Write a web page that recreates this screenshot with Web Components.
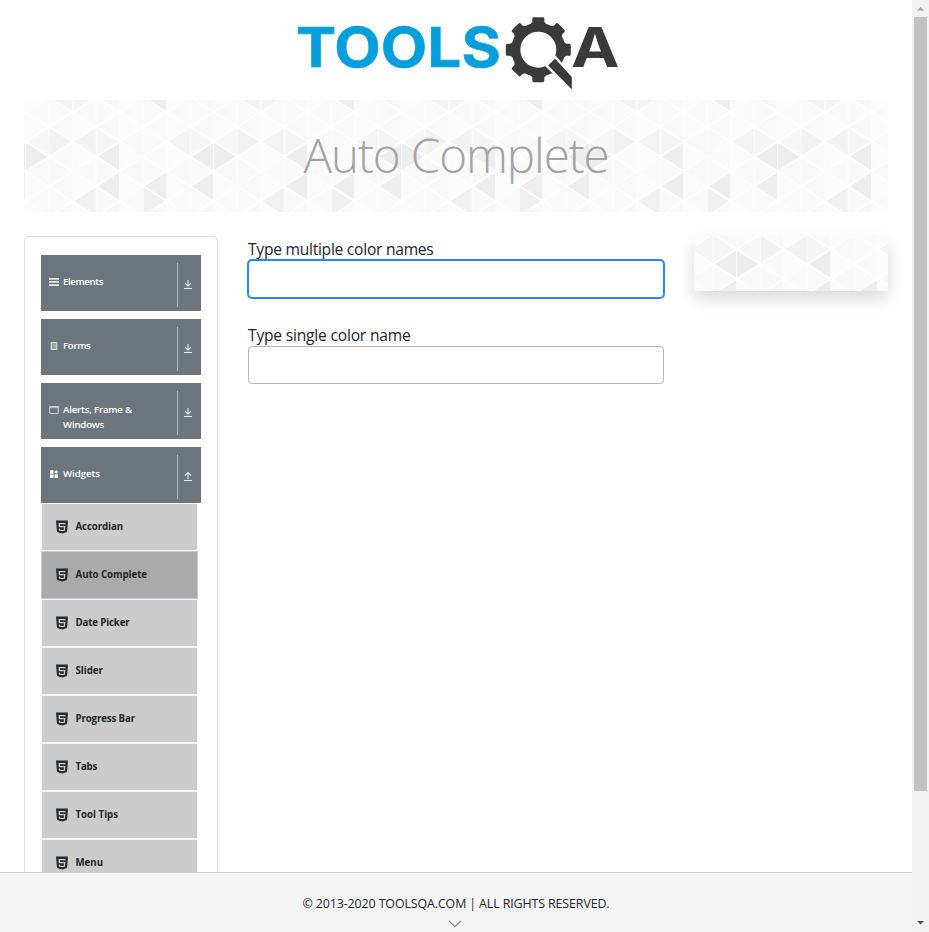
<!DOCTYPE html>
<html lang="en">
<head>
<meta charset="utf-8">
<title>ToolsQA</title>
<style>
html,body{margin:0;height:100%;overflow:hidden;background:#fff}
body{font-family:"Open Sans","Noto Sans",sans-serif;color:#212529}
</style>
</head>
<body>
<demo-page></demo-page>
<script>
const define = (name, html, ready) => customElements.define(name, class extends HTMLElement {
  constructor() {
    super();
    const t = document.createElement('template');
    t.innerHTML = html;
    this.attachShadow({mode: 'open'}).append(t.content.cloneNode(true));
  }
  connectedCallback() { if (ready) ready(this, this.shadowRoot); }
});

/* Single line whose letter spacing is tuned to a given width. */
define('fit-text', `<style>:host{display:inline-block;white-space:nowrap}span{display:inline-block}</style><span><slot></slot></span>`, (el, root) => {
  const span = root.querySelector('span'), n = el.textContent.length;
  const diff = (+el.getAttribute('width') - span.getBoundingClientRect().width) / n;
  span.style.letterSpacing = diff.toFixed(3) + 'px';
});

/* Triangle mosaic, centred in its box. */
define('triangle-mosaic', `<style>:host{display:block;overflow:hidden;background:#fdfdfd}svg{display:block;width:100%;height:100%}</style><svg></svg>`, (el, root) => {
  const W = +el.getAttribute('w'), H = +el.getAttribute('h'), cw = 23.5, h = 14.85;
  const x0 = W / 2 - 54.3 - 188 * 3, y0 = H / 2 + .6 - 4 * h;
  const dark = {'0,4':'ededed','1,0':'f3f3f3','1,3':'f2f2f2','2,0':'f4f4f4','2,3':'f3f3f3','2,7':'f1f1f1','3,4':'ededed','3,3':'f5f5f5','3,6':'ededed','5,0':'eeeeee','5,6':'eeeeee','5,7':'f0f0f0','6,3':'f4f4f4','7,4':'ededed','7,6':'eeeeee','7,3':'f5f5f5','0,3':'f6f6f6','4,3':'f8f8f8'};
  const light = ['f8f8f8','fafafa','f9f9f9','fafafa','f8f8f8','fbfbfb'];
  let s = '';
  for (let c = 0; c < 72; c++) for (let n = -1; n < 9; n++) {
    const k = c % 8, l = x0 + c * cw, r = l + cw, y = y0 + n * h;
    if (r < 0 || l > W) continue;
    const left = (k % 2 === 0) === (Math.abs(n) % 2 === 1);
    const a = left ? l : r, b = left ? r : l;
    const d = left ? -1 : 1;
    const f = dark[k + ',' + n] || light[(k * 5 + (n + 1) * 7 + k * n) % 6];
    s += `<polygon points="${a-d*2.8},${y} ${b+d*1.1},${y-h+2.4} ${b+d*1.1},${y+h-2.4}" fill="#${f}" stroke="#${f}" stroke-width="1.2" stroke-linejoin="round"/>`;
  }
  root.querySelector('svg').innerHTML = s;
});

define('site-logo', `<style>:host{display:block;height:100px}svg{display:block;margin:0 auto}text{font-family:Inter,"Liberation Sans",sans-serif;font-weight:700;font-size:55.5px}</style>
<svg width="330" height="100" viewBox="293 0 330 100">
<text x="296" y="67.2" fill="#069fdc" stroke="#069fdc" stroke-width=".6" textLength="205" lengthAdjust="spacingAndGlyphs">TOOLS</text>
<g fill="#3a3a3b"><g id="gear"></g></g>
<circle cx="538.3" cy="49.7" r="18" fill="#fff"/>
<path d="M555 55 576 79V96L544 65Z" fill="#fff"/>
<path d="M555 58.5 571.8 77V89.2L548.2 65.5Z" fill="#3a3a3b"/>
<text x="571" y="67.2" fill="#3a3a3b" textLength="48.5" lengthAdjust="spacingAndGlyphs">A</text>
</svg>`, (el, root) => {
  let s = '<circle cx="538.3" cy="49.7" r="27"/>';
  for (let i = 0; i < 8; i++) s += `<path transform="rotate(${i * 45} 538.3 49.7)" d="M529.8 25 532.3 21.8V18.6Q532.3 17.2 533.8 17.2H542.8Q544.3 17.2 544.3 18.6V21.8L546.8 25Z"/>`;
  root.querySelector('#gear').innerHTML = s;
});

define('page-banner', `<style>:host{display:grid;height:112px}triangle-mosaic,h1{grid-area:1/1}h1{margin:0;text-align:center;font-weight:300;font-size:47.5px;line-height:110px;color:#a3a3a3}</style>
<triangle-mosaic w="864" h="112"></triangle-mosaic><h1><slot></slot></h1>`);

const icons = {
  list: '<path d="M0 1h10v1.7H0zM0 4.1h10v1.7H0zM0 7.3h10V9H0z"/>',
  form: '<path fill="#9da3a9" stroke="#dfe2e4" d="M2.2 1.5h5.6v7H2.2z"/>',
  window: '<path fill="none" stroke="#d3d6d9" d="M.7 1.5h8.6v7H.7zM.7 2.7h8.6"/>',
  widgets: '<path fill="#fff" d="M1 1.3h3.5v3.4H1zM5.4 3 7.3 1l2 2-2 2zM1 5.6h3.5V9H1zM5.6 5.6H9V9H5.6z"/>'
};
define('menu-header', `<style>
:host{display:flex;height:56px;background:#6c757d;color:#fff;box-sizing:border-box;padding:8px 0 4px 8px;font-size:9.7px;line-height:15px;font-weight:600}
.i{width:10px;height:10px;margin:14px 4px 0 0;fill:#e4e6e8}
.t{flex:1;padding-top:11px}
.a{width:23px;height:44px;border-left:1px solid #b7bbc0;display:grid;place-items:center}
.a svg{width:10px;height:11px;fill:none;stroke:#e4e6e8;stroke-width:1.1;margin:0 3px 4px 0}
</style><svg class="i" viewBox="0 0 10 10"></svg><div class="t"><slot></slot></div><div class="a"><svg viewBox="0 0 10 11"><path d=""/><path d="M1 10.5h8"/></svg></div>`, (el, root) => {
  root.querySelector('.i').innerHTML = icons[el.getAttribute('icon')];
  root.querySelector('.a path').setAttribute('d', el.hasAttribute('open') ? 'M5 9V3M2 5.5 5 2.5l3 3' : 'M5 2v6M2 5.2l3 3 3-3');
});

define('menu-entry', `<style>
:host{display:flex;align-items:center;box-sizing:border-box;width:157px;height:48px;background:#ccc;border:1px solid #f6f6f6;padding:0 0 1px 14px;font-size:9.7px;font-weight:700;color:#212529}
:host([active]){background:#aaa;border-color:#c6cad2}
svg{width:12px;height:14px;margin-right:7.5px}
</style><svg viewBox="0 0 12 14"><path fill="#24292d" d="M0 .5h12l-1 11.4L6 13.5 1 11.9z"/><path fill="none" stroke="#d5d5d5" stroke-width="1.2" d="M9.4 3.6H3.3v3h5.4L8.4 10 6 10.7 3.5 10V8.6"/></svg><slot></slot>`);

define('side-menu', `<style>
:host{display:flex;flex-direction:column;gap:8px;box-sizing:border-box;width:194px;border:1px solid #dfdfdf;border-radius:5px;padding:18px 16px;height:800px}
.g{display:block}
</style>
<menu-header icon="list"><fit-text width="40">Elements</fit-text></menu-header>
<menu-header icon="form"><fit-text width="27.5">Forms</fit-text></menu-header>
<menu-header icon="window"><fit-text width="69">Alerts, Frame &amp;</fit-text><br><fit-text width="41">Windows</fit-text></menu-header>
<div class="g"><menu-header icon="widgets" open><fit-text width="37">Widgets</fit-text></menu-header>
<menu-entry><fit-text width="47.5">Accordian</fit-text></menu-entry>
<menu-entry active><fit-text width="71.5">Auto Complete</fit-text></menu-entry>
<menu-entry><fit-text width="54">Date Picker</fit-text></menu-entry>
<menu-entry><fit-text width="27.5">Slider</fit-text></menu-entry>
<menu-entry><fit-text width="59.5">Progress Bar</fit-text></menu-entry>
<menu-entry><fit-text width="21.5">Tabs</fit-text></menu-entry>
<menu-entry><fit-text width="42.5">Tool Tips</fit-text></menu-entry>
<menu-entry><fit-text width="27.5">Menu</fit-text></menu-entry></div>`);

define('color-field', `<style>
:host{display:block}
label{display:block;box-sizing:border-box;height:24px;padding-top:1px;font-size:15.6px;line-height:24px}
div{height:38px;box-sizing:border-box;border:1px solid #b3b3b3;border-radius:4px;background:#fff}
:host([focused]) div{border-color:#2684ff;box-shadow:0 0 0 1px #2684ff}
</style><label><slot></slot></label><div></div>`);

define('page-footer', `<style>
:host{display:flex;flex-direction:column;align-items:center;box-sizing:border-box;height:60px;border-top:1px solid #ccc;background:#f4f4f4;font-size:12.4px;line-height:18px;padding-top:22px}
svg{display:block;margin:7px 3px 0 0}
</style><slot></slot><svg width="14" height="8" viewBox="0 0 14 8"><path d="M1 1l6 5.6L13 1" fill="none" stroke="#8c8c8c" stroke-width="1.2"/></svg>`);

define('scroll-rail', `<style>
:host{display:flex;flex-direction:column;align-items:center;width:17px;background:#f1f1f1}
svg{display:block;width:17px;height:17px}.thumb{width:13px;height:774px;background:#c1c1c1;margin-bottom:auto}
</style><svg viewBox="0 0 17 17"><path fill="#a3a3a3" d="M5 10.5h7L8.5 7z"/></svg><div class="thumb"></div><svg viewBox="0 0 17 17"><path fill="#505050" d="M5 6h7L8.5 9.5z"/></svg>`);

define('demo-page', `<style>
:host{display:grid;grid-template-columns:912px 17px;height:932px;overflow:hidden}
.view{display:grid;grid-template-rows:872px 60px;min-width:0}
.content{overflow:hidden;padding:0 24px}
.logo{padding-left:4px}
.cols{display:grid;grid-template-columns:194px 416px 194px;gap:30px;align-items:start;margin-top:24px}
.fields{display:grid;gap:24px}
.ad{height:55px;box-shadow:0 8px 16px rgba(0,0,0,.15)}
</style>
<div class="view"><div class="content">
<site-logo class="logo"></site-logo>
<page-banner><fit-text width="305">Auto Complete</fit-text></page-banner>
<div class="cols"><side-menu></side-menu>
<div class="fields"><color-field focused><fit-text width="185.5">Type multiple color names</fit-text></color-field>
<color-field><fit-text width="162.5">Type single color name</fit-text></color-field></div>
<triangle-mosaic class="ad" w="194" h="55"></triangle-mosaic></div></div>
<page-footer><fit-text width="307">© 2013-2020 TOOLSQA.COM | ALL RIGHTS RESERVED.</fit-text></page-footer></div>
<scroll-rail></scroll-rail>`);
</script>
</body>
</html>
